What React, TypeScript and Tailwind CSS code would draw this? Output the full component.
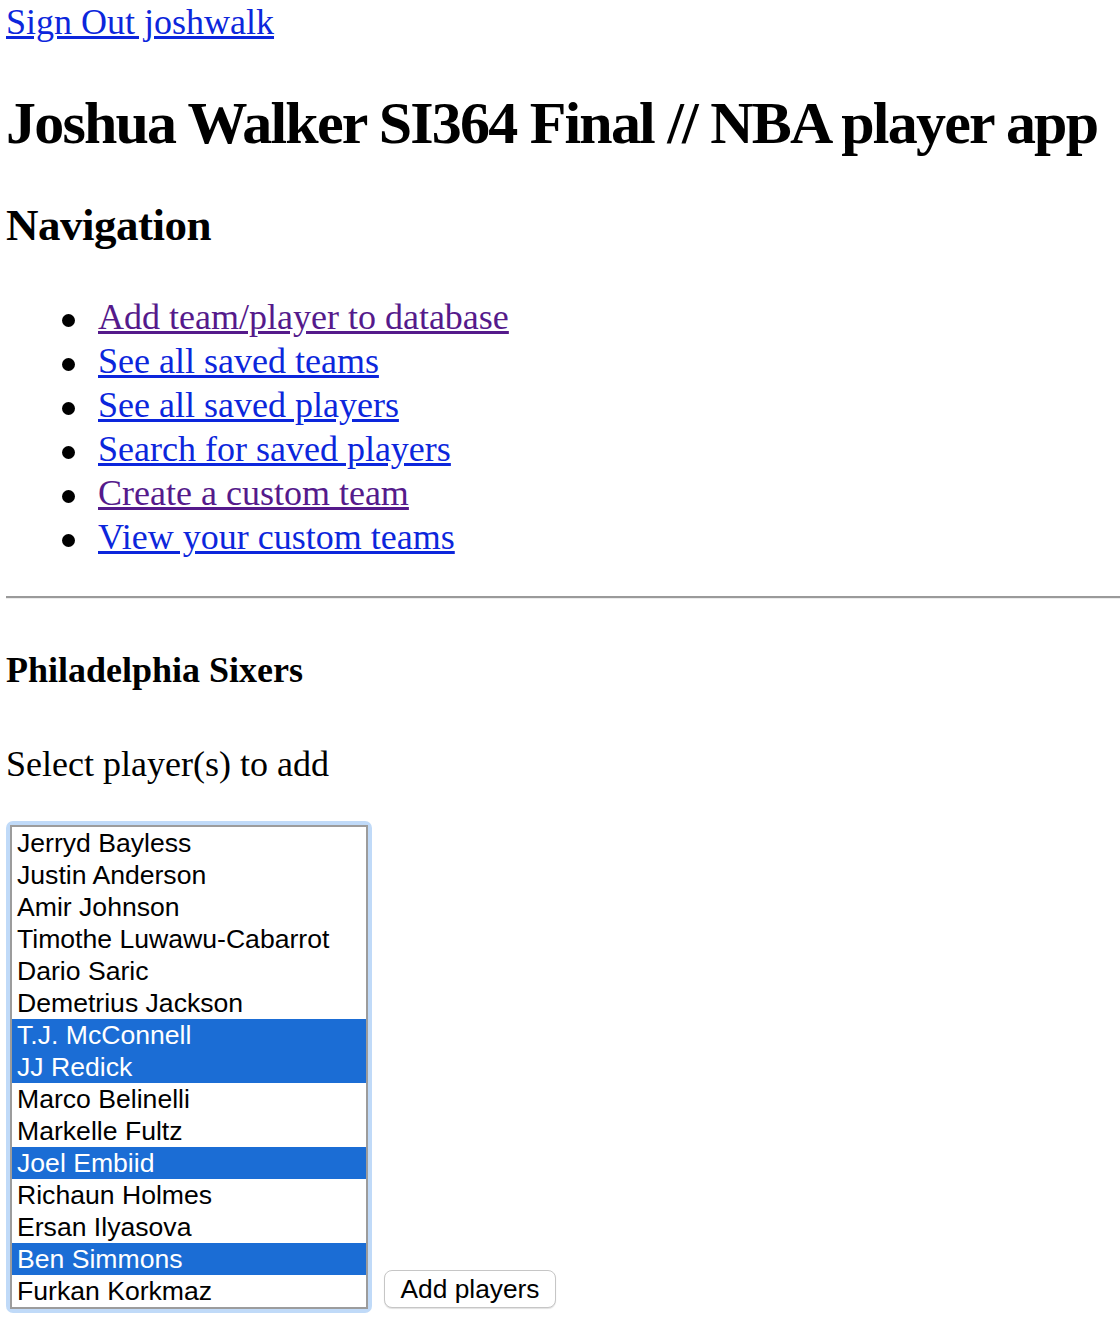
import React from "react";

const players: { name: string; sel?: boolean }[] = [
  { name: "Jerryd Bayless" },
  { name: "Justin Anderson" },
  { name: "Amir Johnson" },
  { name: "Timothe Luwawu-Cabarrot" },
  { name: "Dario Saric" },
  { name: "Demetrius Jackson" },
  { name: "T.J. McConnell", sel: true },
  { name: "JJ Redick", sel: true },
  { name: "Marco Belinelli" },
  { name: "Markelle Fultz" },
  { name: "Joel Embiid", sel: true },
  { name: "Richaun Holmes" },
  { name: "Ersan Ilyasova" },
  { name: "Ben Simmons", sel: true },
  { name: "Furkan Korkmaz" },
];

const nav: { label: string; visited?: boolean }[] = [
  { label: "Add team/player to database", visited: true },
  { label: "See all saved teams" },
  { label: "See all saved players" },
  { label: "Search for saved players" },
  { label: "Create a custom team", visited: true },
  { label: "View your custom teams" },
];

export default function App() {
  return (
    <div className="min-h-[1340px] w-[1120px] overflow-hidden bg-white pl-[6px] pt-[2px] font-['Liberation_Serif','Times_New_Roman',serif] text-black">
      <div className="h-[41px] text-[36px] leading-[41px]">
        <a href="#" className="text-[#0c26dc] underline">
          Sign Out joshwalk
        </a>
      </div>
      <h1 className="mt-[45px] h-[70px] whitespace-nowrap text-[60px] font-bold leading-[70px] tracking-[-1.8px]">
        Joshua Walker SI364 Final // NBA player app
      </h1>
      <h2 className="mt-[41px] h-[52px] text-[45px] font-bold leading-[52px] tracking-[-0.5px]">
        Navigation
      </h2>
      <ul className="mt-[44px]">
        {nav.map((n) => (
          <li key={n.label} className="flex h-[44px] items-center text-[36px] leading-[44px]">
            <span className="ml-[56px] mr-[23px] mt-[7px] inline-block h-[13px] w-[13px] rounded-full bg-black" />
            <a
              href="#"
              className={n.visited ? "text-[#551a8b] underline" : "text-[#0c26dc] underline"}
            >
              {n.label}
            </a>
          </li>
        ))}
      </ul>
      <div className="mt-[37px] h-[3px] border-t-2 border-b border-t-[#9a9a9a] border-b-[#ececec]" />
      <h3 className="mt-[50px] h-[42px] text-[36px] font-bold leading-[42px]">
        Philadelphia Sixers
      </h3>
      <div className="mt-[53px] h-[41px] text-[36px] leading-[41px]">Select player(s) to add</div>
      <div className="mt-[36px] flex items-end gap-[12px]">
        <div className="w-[366px] rounded-[7px] bg-[#c0daf8] p-[4px]">
          <div className="border-2 border-[#9c9c9c] bg-white font-['Liberation_Sans',Arial,sans-serif]">
            {players.map((p) => (
              <div
                key={p.name}
                className={
                  p.sel
                    ? "h-[32px] whitespace-nowrap bg-[#1b6dd5] pl-[5px] text-[26.6px] leading-[32px] text-white"
                    : "h-[32px] whitespace-nowrap pl-[5px] text-[26.6px] leading-[32px] text-black"
                }
              >
                {p.name}
              </div>
            ))}
          </div>
        </div>
        <button className="mb-[5px] h-[38px] w-[172px] rounded-[8px] border border-[#c6c6c6] bg-white font-['Liberation_Sans',Arial,sans-serif] text-[26.3px] leading-[36px] text-black shadow-[0_1px_1px_rgba(0,0,0,0.12)]">
          Add players
        </button>
      </div>
    </div>
  );
}
